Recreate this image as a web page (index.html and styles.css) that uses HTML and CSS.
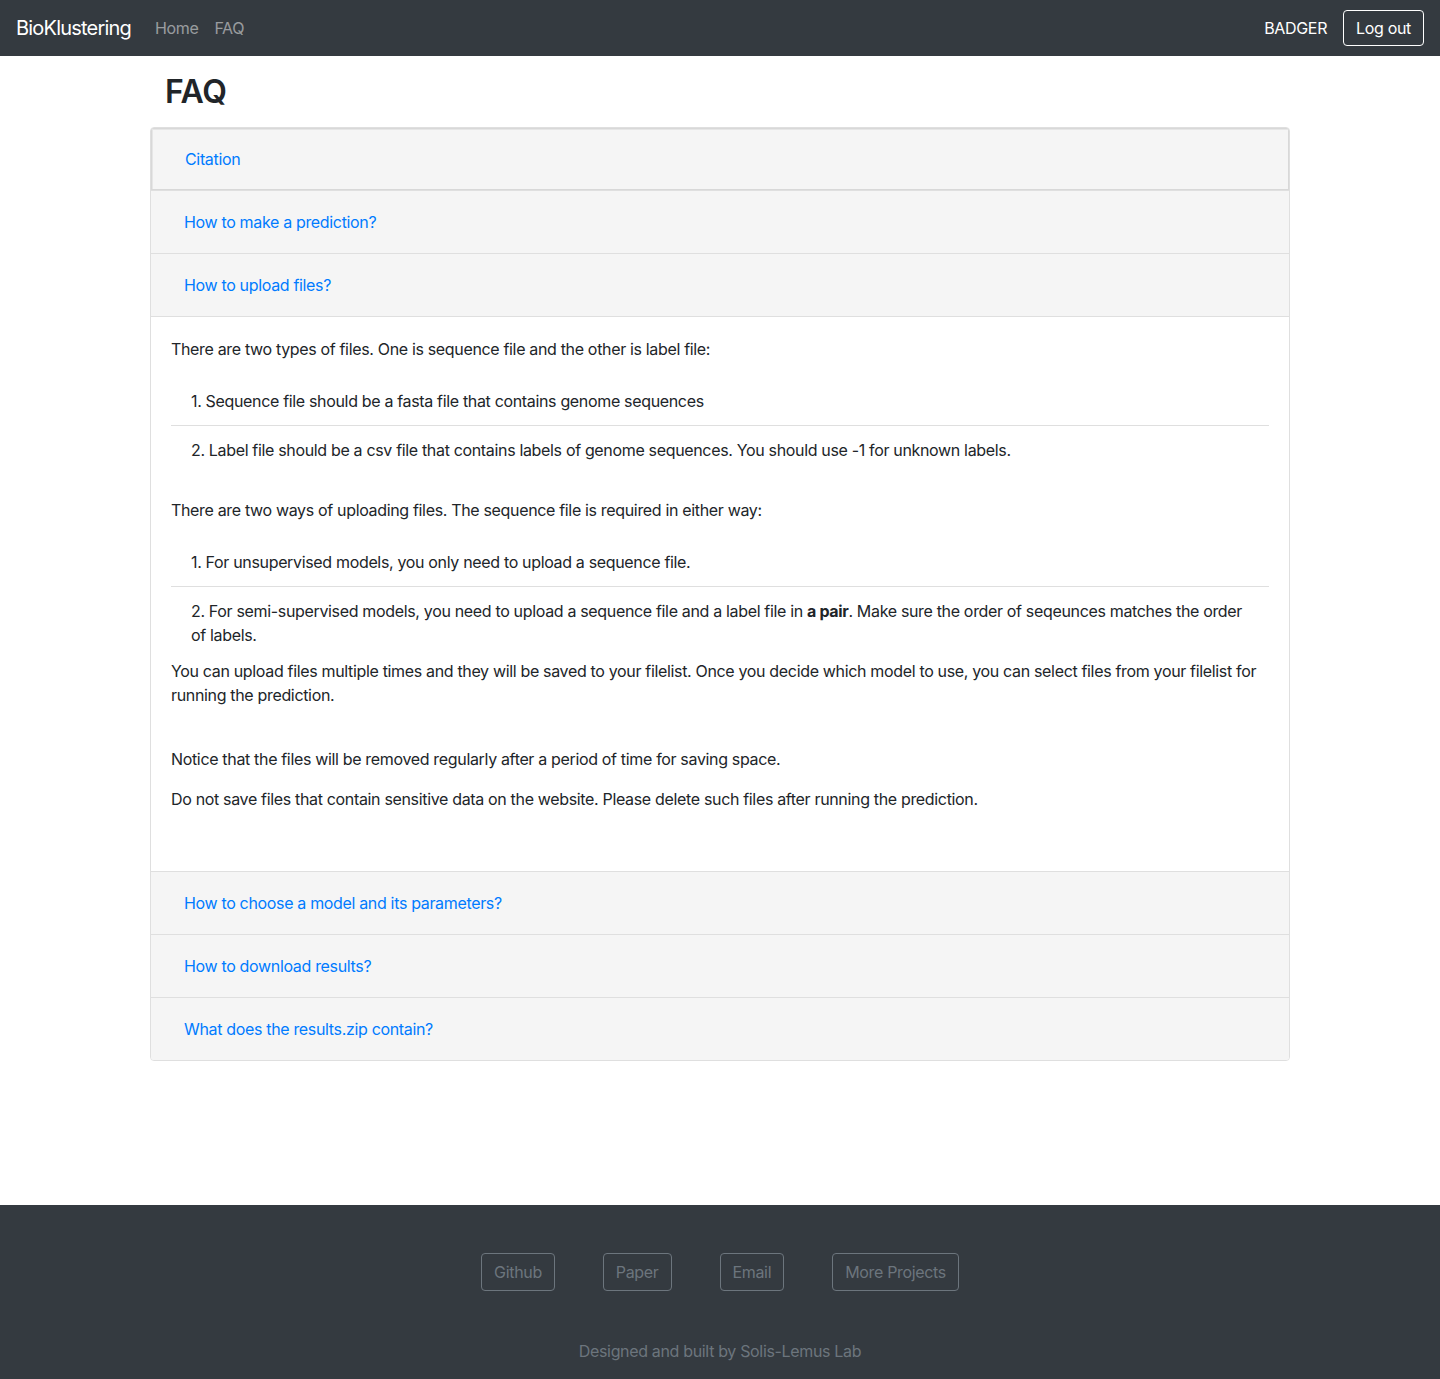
FILE: index.html
```html
<!DOCTYPE html>
<html lang="en">
<head>
<meta charset="utf-8">
<title>BioKlustering - FAQ</title>
<link rel="stylesheet" href="styles.css">
</head>
<body>
<nav class="navbar">
  <div class="nav-left">
    <a class="brand" href="#">BioKlustering</a>
    <a class="nav-link" href="#">Home</a>
    <a class="nav-link" href="#">FAQ</a>
  </div>
  <div class="nav-right">
    <span class="user">BADGER</span>
    <a class="btn-logout" href="#">Log out</a>
  </div>
</nav>

<main class="main">
  <h2 class="page-title">FAQ</h2>
  <div class="accordion">
    <div class="card-header focused"><a class="btn-link" href="#">Citation</a></div>
    <div class="card-header"><a class="btn-link" href="#">How to make a prediction?</a></div>
    <div class="card-header"><a class="btn-link" href="#">How to upload files?</a></div>
    <div class="card-body">
      <p>There are two types of files. One is sequence file and the other is label file:</p>
      <ul class="list-group">
        <li>1. Sequence file should be a fasta file that contains genome sequences</li>
        <li>2. Label file should be a csv file that contains labels of genome sequences. You should use -1 for unknown labels.</li>
      </ul>
      <br>
      <p>There are two ways of uploading files. The sequence file is required in either way:</p>
      <ul class="list-group">
        <li>1. For unsupervised models, you only need to upload a sequence file.</li>
        <li>2. For semi-supervised models, you need to upload a sequence file and a label file in <b>a pair</b>. Make sure the order of seqeunces matches the order of labels.</li>
      </ul>
      <p>You can upload files multiple times and they will be saved to your filelist. Once you decide which model to use, you can select files from your filelist for running the prediction.</p>
      <br>
      <p>Notice that the files will be removed regularly after a period of time for saving space.</p>
      <p>Do not save files that contain sensitive data on the website. Please delete such files after running the prediction.</p>
      <br>
    </div>
    <div class="card-header"><a class="btn-link" href="#">How to choose a model and its parameters?</a></div>
    <div class="card-header"><a class="btn-link" href="#">How to download results?</a></div>
    <div class="card-header last"><a class="btn-link" href="#">What does the results.zip contain?</a></div>
  </div>
</main>

<footer class="footer">
  <div class="footer-links">
    <a class="btn-footer" href="#">Github</a>
    <a class="btn-footer" href="#">Paper</a>
    <a class="btn-footer" href="#">Email</a>
    <a class="btn-footer" href="#">More Projects</a>
  </div>
  <p class="credit">Designed and built by Solis-Lemus Lab</p>
</footer>
</body>
</html>
```

FILE: styles.css
```css
* { box-sizing: border-box; }
html, body { margin: 0; padding: 0; }
body {
  font-family: Inter, "Liberation Sans", Arial, sans-serif;
  font-size: 16px;
  line-height: 24px;
  letter-spacing: -0.021em;
  color: #212529;
  background: #fff;
  min-height: 100vh;
  display: flex;
  flex-direction: column;
}
a { text-decoration: none; }

.navbar {
  height: 56px;
  background: #343a40;
  display: flex;
  align-items: center;
  justify-content: space-between;
  padding: 8px 16px;
}
.nav-left, .nav-right { display: flex; align-items: center; }
.brand {
  color: #fff;
  font-size: 20px;
  line-height: 30px;
  margin-right: 16px;
  letter-spacing: -0.04em;
}
.nav-link {
  color: rgba(255,255,255,.5);
  padding: 8px;
}
.user { color: #fff; margin-right: 16px; }
.btn-logout {
  color: #fff;
  border: 1px solid #fff;
  border-radius: 4px;
  padding: 5px 12px;
  line-height: 24px;
}

.main {
  width: 1140px;
  margin: 0 auto;
}
.page-title {
  margin: 0 0 16px 15px;
  padding-top: 17px;
  font-size: 32px;
  line-height: 38px;
  font-weight: 600;
}
.accordion {
  border: 1px solid #dfdfdf;
  border-radius: 4px;
  overflow: hidden;
}
.card-header {
  background: #f5f5f5;
  padding: 12px 20px;
  border-bottom: 1px solid #dfdfdf;
}
.card-header.last { border-bottom: 0; }
.card-header.focused {
  box-shadow: inset 0 0 0 1px #d8d8d8, inset 1px 1px 0 1px #e6e6e6;
  padding: 12px 20px 12px 21px;
}
.btn-link {
  display: inline-block;
  color: #007bff;
  padding: 6px 12px;
  border: 1px solid transparent;
  line-height: 24px;
}
.card-body {
  padding: 20px 20px 20px;
  border-bottom: 1px solid #dfdfdf;
}
.card-body p { margin: 0 0 16px; }
.list-group {
  list-style: none;
  margin: 0;
  padding: 0;
}
.list-group li {
  padding: 12px 20px;
  border-top: 1px solid #dfdfdf;
}
.list-group li:first-child { border-top: 0; }

.footer {
  margin-top: auto;
  background: #343a40;
  padding: 48px 0 16px;
  text-align: center;
}
.footer-links {
  display: flex;
  justify-content: center;
  gap: 48px;
}
.btn-footer {
  color: #6c757d;
  border: 1px solid #6c757d;
  border-radius: 4px;
  padding: 6px 12px;
  line-height: 24px;
}
.credit {
  color: #6c757d;
  margin: 48px 0 0;
}
```
